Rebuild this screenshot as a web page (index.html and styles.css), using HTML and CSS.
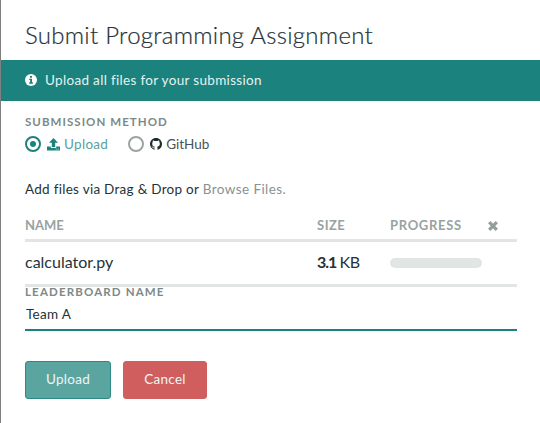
FILE: index.html
```
<!DOCTYPE html>
<html lang="en">
<head>
<meta charset="utf-8">
<title>Submit Programming Assignment</title>
<link rel="stylesheet" href="styles.css">
</head>
<body>
<main class="modal">
  <h1 class="title">Submit Programming Assignment</h1>
  <div class="banner">
    <svg class="info" viewBox="0 0 12 12"><circle cx="6" cy="6" r="6" fill="#fff"/><path d="M5 2h2v1.7H5zM4.2 4.7H7v3.6h.9v1.4H4.2V8.3h.9V6.1h-.9z" fill="#1c827d"/></svg>
    <span class="banner-text">Upload all files for your submission</span>
  </div>
  <div class="content">
    <div class="label method-label">Submission Method</div>
    <div class="methods">
      <label class="method method-upload"><span class="radio selected"></span>
        <svg class="upload-icon" viewBox="0 0 13 13"><path d="M6.5 0 11 4.7H8.2V9H4.8V4.7H2z"/><path d="M0 8.5h3.8v1.4h5.4V8.5H13v4H0zM8.7 10.7v.9h1v-.9zm2 0v.9h1v-.9z" fill-rule="evenodd"/></svg>
        <span class="upload-text">Upload</span></label>
      <label class="method"><span class="radio"></span>
        <svg class="github-icon" viewBox="0 0 16 16"><path d="M8 0C3.58 0 0 3.58 0 8c0 3.54 2.29 6.53 5.47 7.59.4.07.55-.17.55-.38v-1.49c-2.01.37-2.53-.49-2.69-.94-.09-.23-.48-.94-.82-1.13-.28-.15-.68-.52-.01-.53.63-.01 1.08.58 1.23.82.72 1.21 1.87.87 2.33.66.07-.52.28-.87.51-1.07-1.78-.2-3.64-.89-3.64-3.95 0-.87.31-1.59.82-2.15-.08-.2-.36-1.02.08-2.12 0 0 .67-.21 2.2.82a7.6 7.6 0 0 1 4 0c1.53-1.04 2.2-.82 2.2-.82.44 1.1.16 1.92.08 2.12.51.56.82 1.27.82 2.15 0 3.07-1.87 3.75-3.65 3.95.29.25.54.73.54 1.48v2.2c0 .21.15.46.55.38A8 8 0 0 0 16 8c0-4.42-3.58-8-8-8z"/></svg>
        <span class="github-text">GitHub</span></label>
    </div>
    <p class="drop"><span class="drop-text">Add files via Drag &amp; Drop or</span> <a class="browse">Browse Files.</a></p>
    <div class="row head">
      <span class="th-name">NAME</span><span class="th-size">SIZE</span><span class="th-progress">PROGRESS</span>
      <svg class="remove" viewBox="0 0 10 10"><path d="m1.2 1.2 7.6 7.6m0-7.6-7.6 7.6" stroke="#929d9c" stroke-width="3.2"/></svg>
    </div>
    <div class="row file">
      <span class="file-name">calculator.py</span><span class="size"><b>3.1</b> <span class="unit">KB</span></span><span class="bar"></span>
    </div>
    <div class="label board-label">Leaderboard Name</div>
    <div class="field"><span class="team">Team A</span></div>
    <div class="actions">
      <button class="btn submit">Upload</button>
      <button class="btn cancel">Cancel</button>
    </div>
  </div>
</main>
</body>
</html>
```
FILE: styles.css
```
* { box-sizing: border-box; }
body { margin: 0; background: #fff; font-family: Lato, sans-serif; color: #263238; font-size: 14px; }
.modal { height: 423px; border-left: 1px solid #808080; overflow: hidden; white-space: nowrap; }
.title { margin: 0; height: 60px; padding: 20px 0 0 24px; font-size: 24px; line-height: 30px; font-weight: 300; letter-spacing: .26px; -webkit-text-stroke: .2px #263238; }
.banner { height: 41px; background: #1c827d; color: #e4f3f1; display: flex; align-items: center; gap: 8px; padding: 0 0 2px 24px; }
.info { width: 12px; height: 12px; }
.banner-text { font-size: 13.5px; letter-spacing: .32px; }
.content { padding: 0 23px 0 24px; }
.label { font-size: 11.5px; font-weight: 700; line-height: 14px; letter-spacing: 1.05px; text-transform: uppercase; color: #7d8987; }
.method-label { padding-top: 14px; height: 28px; }
.methods { display: flex; gap: 20px; height: 30px; align-items: center; }
.method { display: flex; align-items: center; }
.radio { width: 16px; height: 16px; border: 2.5px solid #99a4a3; border-radius: 50%; margin-right: 6px; display: grid; place-items: center; }
.selected { border-color: #1c827d; }
.selected::after { content: ""; width: 6px; height: 6px; border-radius: 50%; background: #1c827d; }
.upload-icon { width: 13px; height: 13px; fill: #1c827d; margin-right: 4px; }
.github-icon { width: 12px; height: 12px; fill: #1e2b2e; margin-right: 4px; }
.upload-text, .github-text { font-size: 13.5px; letter-spacing: .3px; }
.github-text { letter-spacing: 0; }
.upload-text { color: #58a29f; }
.github-text { color: #465357; }
.drop { margin: 0; padding-top: 20px; height: 54px; line-height: 20px; font-size: 13.5px; letter-spacing: .28px; }
.browse { color: #879391; letter-spacing: .42px; }
.row { display: grid; grid-template-columns: 292px 73px 98px 1fr; align-items: center; border-bottom: 3px solid #e1e6e5; }
.head { height: 29px; font-size: 13px; font-weight: 700; color: #98a3a1; padding-bottom: 2px; }
.th-size { letter-spacing: .5px; }
.th-progress { letter-spacing: .68px; }
.remove { width: 10px; height: 10px; margin-top: 2px; }
.file { height: 45px; font-size: 16px; }
.file-name, .size { padding-bottom: 3px; }
.size b { letter-spacing: -1px; }
.size .unit { margin-left: -1px; letter-spacing: -.4px; }
.bar { width: 92px; height: 10px; border-radius: 5px; background: #e1e6e5; }
.board-label { line-height: 10px; height: 12px; letter-spacing: 1.15px; }
.field { height: 32px; border-bottom: 2px solid #1c827d; padding: 5px 1px 0; line-height: 20px; font-size: 13.5px; letter-spacing: .3px; }
.actions { display: flex; gap: 12px; padding-top: 30px; }
.btn { height: 38px; border-radius: 3px; font: 13.5px Lato, sans-serif; color: #eef6f5; padding: 0 0 2px; letter-spacing: .3px; }
.submit { width: 86px; background: #5ba5a1; border: 1px solid #2b8a86; }
.cancel { width: 84px; background: #d05e5f; border: 1px solid #d05e5f; }
```
